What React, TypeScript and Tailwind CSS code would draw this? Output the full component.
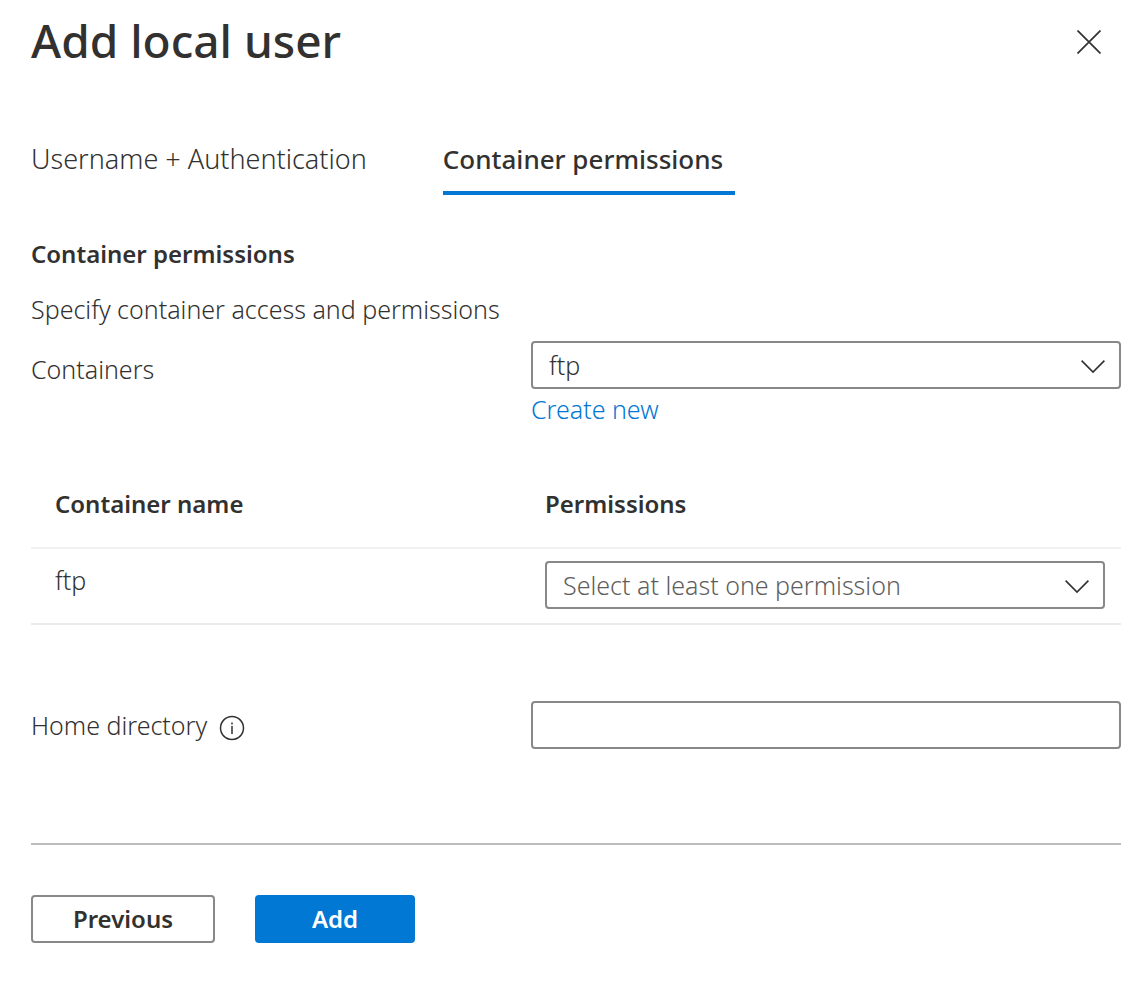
import { useState } from "react";
import type { SelectHTMLAttributes } from "react";

const fieldBorder = "h-12 w-full rounded-[4px] border-2 border-[#8a8886] bg-white";

function Chevron() {
  return (
    <svg
      className="pointer-events-none absolute top-1/2 right-4 h-6 w-6 -translate-y-1/2"
      viewBox="0 0 24 24"
      fill="none"
      stroke="#323130"
      strokeWidth="1.6"
      aria-hidden="true"
    >
      <path d="M0.6 7.6 L12 19 L23.4 7.6" />
    </svg>
  );
}

function Dropdown({ tone, children, ...props }: SelectHTMLAttributes<HTMLSelectElement> & { tone: string }) {
  return (
    <div className="relative w-full">
      <select {...props} className={`${fieldBorder} ${tone} block appearance-none pr-12 pl-4`}>
        {children}
      </select>
      <Chevron />
    </div>
  );
}

export default function App() {
  const [home, setHome] = useState("");
  return (
    <main className="bg-white pr-[25px] pb-11 pl-[31px] font-['Noto_Sans','Open_Sans',sans-serif] text-[25px] leading-8 font-light text-[#323130]">
      <header className="flex items-center justify-between pt-3 pr-5">
        <h1 className="pb-1 text-[46px] leading-[56px] font-medium">Add local user</h1>
        <button type="button" aria-label="Close" className="flex">
          <svg className="h-6 w-6" viewBox="0 0 24 24" fill="none" stroke="#323130" strokeWidth="1.7">
            <path d="M0.5 0.5 L23.5 23.5 M23.5 0.5 L0.5 23.5" />
          </svg>
        </button>
      </header>

      <div role="tablist" className="mt-[67px] flex gap-[76px] leading-10">
        <button type="button" role="tab" aria-selected="false" className="flex pb-4 text-[27px]">
          Username + Authentication
        </button>
        <button
          type="button"
          role="tab"
          aria-selected="true"
          className="flex border-b-4 border-[#0078d4] pr-3 pb-3 text-[26px] font-medium"
        >
          Container permissions
        </button>
      </div>

      <section>
        <h2 className="mt-[43px] text-[24px] font-semibold">Container permissions</h2>
        <p className="mt-[23px]">Specify container access and permissions</p>

        <div className="mt-4 flex items-start">
          <label htmlFor="containers" className="w-[500px] shrink-0 pt-3">
            Containers
          </label>
          <div className="flex-1">
            <Dropdown id="containers" tone="text-[#323130]" defaultValue="ftp">
              <option value="ftp">ftp</option>
            </Dropdown>
            <a href="#create" className="mt-1 block text-[#0078d4]">
              Create new
            </a>
          </div>
        </div>

        <table className="mt-[37px] w-full table-fixed border-collapse text-left">
          <thead>
            <tr className="h-[86px] border-b-2 border-[#f3f2f1] text-[24px]">
              <th className="w-[490px] pb-0.5 pl-6 font-semibold">Container name</th>
              <th className="pb-0.5 pl-6 font-semibold">Permissions</th>
            </tr>
          </thead>
          <tbody>
            <tr className="h-[76px] border-b-2 border-[#edebe9]">
              <td className="pb-3 pl-6">ftp</td>
              <td className="pr-4 pb-0.5 pl-6">
                <Dropdown aria-label="Permissions for ftp" tone="text-[#605e5c]" defaultValue="">
                  <option value="">Select at least one permission</option>
                </Dropdown>
              </td>
            </tr>
          </tbody>
        </table>

        <div className="mt-[76px] flex items-center">
          <div className="flex w-[500px] shrink-0 items-center gap-3">
            <label htmlFor="home">Home directory</label>
            <svg className="mt-1.5 h-[26px] w-[26px]" viewBox="0 0 26 26" fill="none" stroke="#323130" strokeWidth="1.5" role="img" aria-label="Information">
              <circle cx="13" cy="13" r="11.5" />
              <path d="M13 11V19M13 7.4V9.4" />
            </svg>
          </div>
          <input id="home" type="text" value={home} onChange={(e) => setHome(e.target.value)} className={`${fieldBorder} min-w-0 flex-1 px-4`} />
        </div>
      </section>

      <footer className="mt-[94px] flex gap-10 border-t-2 border-[#bdbdbd] pt-[50px] text-[24px] font-semibold">
        <button type="button" className="h-12 w-[184px] rounded-[4px] border-2 border-[#8a8886]">
          Previous
        </button>
        <button type="button" className="h-12 w-40 rounded-[4px] bg-[#0078d4] text-white">
          Add
        </button>
      </footer>
    </main>
  );
}
